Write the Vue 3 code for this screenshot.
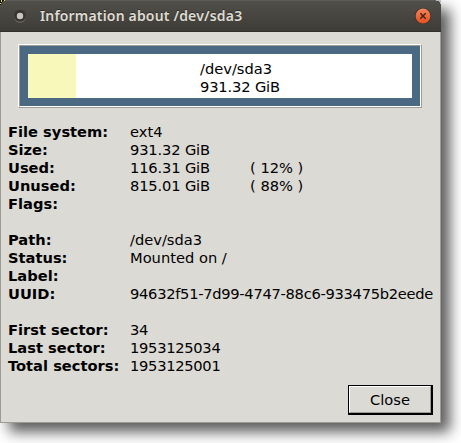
<script setup>
const groups = [
  [
    { label: 'File system:', value: 'ext4' },
    { label: 'Size:', value: '931.32 GiB', kind: 'size' },
    { label: 'Used:', value: '116.31 GiB', kind: 'size', share: '( 12% )' },
    { label: 'Unused:', value: '815.01 GiB', kind: 'size', share: '( 88% )' },
    { label: 'Flags:', value: '' },
  ],
  [
    { label: 'Path:', value: '/dev/sda3' },
    { label: 'Status:', value: 'Mounted on /' },
    { label: 'Label:', value: '' },
    { label: 'UUID:', value: '94632f51-7d99-4747-88c6-933475b2eede', kind: 'number' },
  ],
  [
    { label: 'First sector:', value: '34', kind: 'number' },
    { label: 'Last sector:', value: '1953125034', kind: 'number' },
    { label: 'Total sectors:', value: '1953125001', kind: 'number' },
  ],
]
const usedPercent = 12.5
</script>

<template>
  <div class="desktop">
    <section class="window">
      <header class="titlebar">
        <svg class="corner corner-left" width="5" height="5" viewBox="0 0 5 5" shape-rendering="crispEdges">
          <path d="M0 0H5V1H3V2H2V3H1V5H0Z" fill="#111" />
          <path d="M1 0H2V2H1ZM4 0H5V1H4ZM0 3H1V4H0Z" fill="#e6e01e" />
        </svg>
        <svg class="corner corner-right" width="5" height="5" viewBox="0 0 5 5" shape-rendering="crispEdges">
          <path d="M0 0H5V4H4V2H3V1H0Z" fill="#b9c0c2" />
        </svg>
        <svg class="menu-dot" width="14" height="14" viewBox="0 0 14 14">
          <circle cx="7" cy="7.8" r="6" fill="#74726b" />
          <circle cx="7" cy="6.7" r="6" fill="#363531" />
          <circle cx="7" cy="7" r="3.2" fill="#c9c7c0" />
        </svg>
        <h1 class="title">Information about /dev/sda3</h1>
        <svg class="close-icon" width="18" height="18" viewBox="0 0 18 18">
          <defs>
            <linearGradient id="closeFill" x1="0" y1="0" x2="0" y2="1">
              <stop offset="0" stop-color="#f6835d" />
              <stop offset="1" stop-color="#e4501f" />
            </linearGradient>
          </defs>
          <circle cx="9" cy="9" r="8" fill="#33322e" />
          <circle cx="9" cy="9" r="7.4" fill="url(#closeFill)" />
          <path d="M6.3 6.3 L11.7 11.7 M11.7 6.3 L6.3 11.7" stroke="#4a2215" stroke-width="1.5" />
        </svg>
      </header>
      <main class="body">
        <div class="frame">
          <div class="frame-inner">
            <div class="bar">
              <div class="used" :style="{ width: usedPercent + '%' }"></div>
              <div class="caption">/dev/sda3<br /><span class="size">931.32 GiB</span></div>
            </div>
          </div>
        </div>
        <div class="info">
          <dl v-for="(rows, i) in groups" :key="i" class="group">
            <div v-for="row in rows" :key="row.label" class="row">
              <dt>{{ row.label }}</dt>
              <dd :class="row.kind">{{ row.value }}</dd>
              <dd v-if="row.share">{{ row.share }}</dd>
            </div>
          </dl>
        </div>
        <button class="close"><span class="close-face">Close</span></button>
      </main>
    </section>
  </div>
</template>

<style>
body {
  margin: 0;
  background: #fff;
}
</style>

<style scoped>
.desktop {
  width: 461px;
  height: 443px;
  overflow: hidden;
  background: #fff;
  font-family: "DejaVu Sans", sans-serif;
  font-size: 14.67px;
  line-height: 18px;
  color: #000;
}
.window {
  display: flex;
  flex-direction: column;
  width: 441px;
  height: 423px;
  box-shadow: 9px 9px 13px rgba(0, 0, 0, 0.64);
}
.titlebar {
  position: relative;
  display: flex;
  align-items: center;
  box-sizing: border-box;
  height: 32px;
  padding: 0 9px 0 13px;
  border-top: 1px solid #5d5b55;
  border-bottom: 1px solid #302f2b;
  background: linear-gradient(#504f49, #3d3c37);
}
.corner {
  position: absolute;
  top: -1px;
}
.corner-left {
  left: 0;
}
.corner-right {
  right: 0;
}
.title {
  flex: 1;
  margin: 0 0 0 13px;
  font: 600 14px/20px "Noto Sans", sans-serif;
  letter-spacing: 0.17px;
  color: #dfdbd2;
  text-shadow: 0 -1px #2e2d29;
}
.body {
  display: flex;
  flex-direction: column;
  flex: 1;
  box-sizing: border-box;
  padding: 12px 7px 7px;
  border: 1px solid #9d9b93;
  border-top: 0;
  background: #dcdad5;
}
.frame {
  box-sizing: border-box;
  height: 64px;
  margin: 0 11px 0 10px;
  border: 1px solid;
  border-color: #fff #9d9b93 #9d9b93 #fff;
}
.frame-inner {
  box-sizing: border-box;
  height: 62px;
  padding: 8px;
  border: 1px solid;
  border-color: #9d9b93 #fff #fff #9d9b93;
  background: #4b6983;
}
.bar {
  display: flex;
  height: 44px;
  background: #fff;
}
.used {
  background: #f8f8ba;
}
.caption {
  margin-left: 124px;
  padding-top: 6px;
  white-space: nowrap;
}
.info {
  display: flex;
  flex-direction: column;
  gap: 18px;
  margin-top: 15px;
}
.group {
  margin: 0;
}
.row {
  display: grid;
  grid-template-columns: 122px 120px 1fr;
  height: 18px;
  white-space: nowrap;
}
dt {
  font-weight: bold;
}
dd {
  margin: 0;
}
.size {
  letter-spacing: -0.15px;
}
.number {
  letter-spacing: -0.28px;
}
.close {
  align-self: flex-end;
  width: 85px;
  height: 30px;
  margin-top: auto;
  padding: 0;
  border: 1px solid #000;
  border-right-width: 2px;
  border-bottom-width: 2px;
  background: #dcdad5;
  font: inherit;
  color: #000;
}
.close-face {
  display: block;
  box-sizing: border-box;
  height: 27px;
  border: 1px solid;
  border-color: #fff #9d9b93 #9d9b93 #fff;
  line-height: 26px;
}
</style>
